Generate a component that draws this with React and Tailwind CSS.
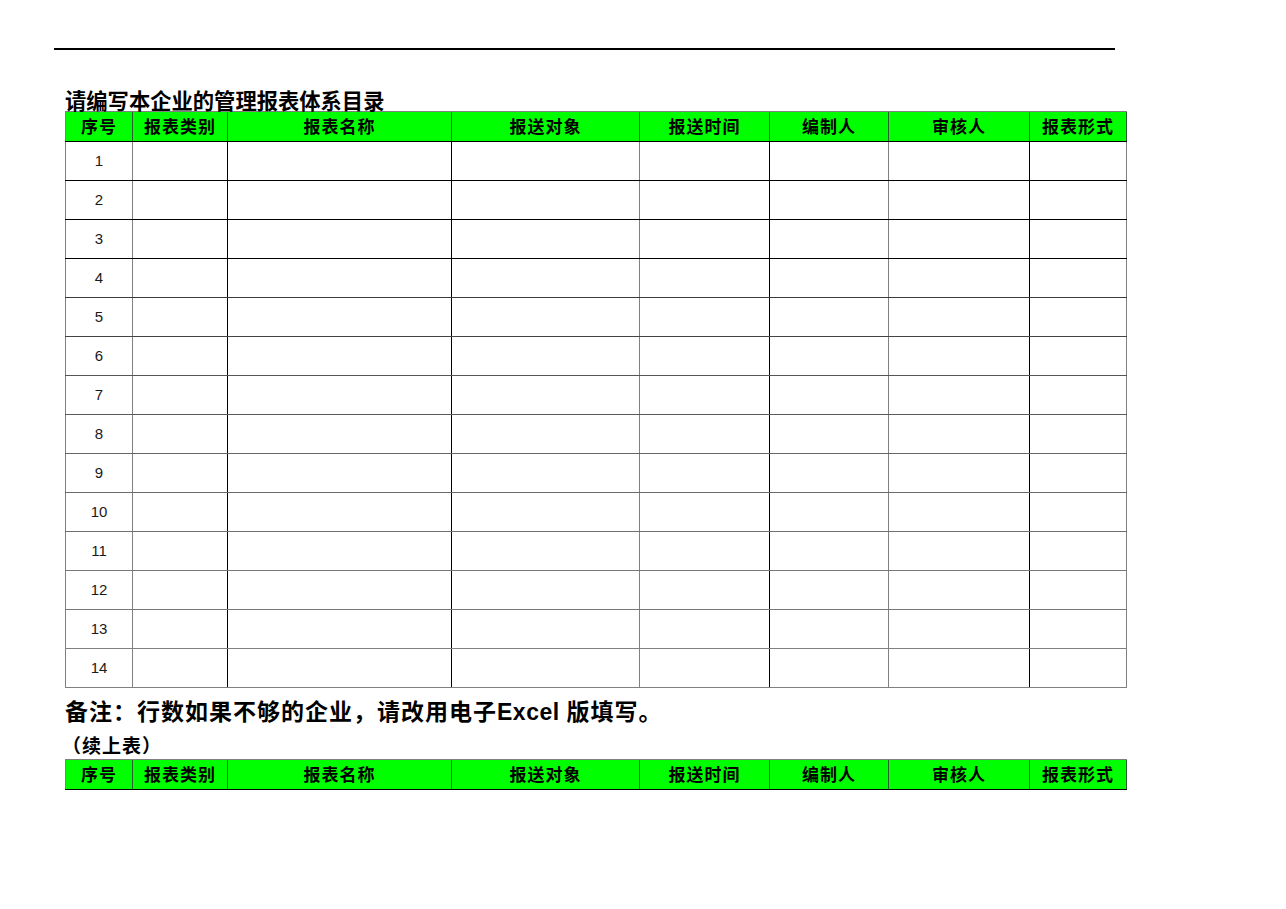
import React from 'react'

// 管理报表体系目录表
const cols = [
  { label: '序号', w: 'w-[67px]', line: 'border-l-[#808080]' },
  { label: '报表类别', w: 'w-[95px]', line: 'border-l-[#808080]' },
  { label: '报表名称', w: 'w-[224px]', line: 'border-l-black' },
  { label: '报送对象', w: 'w-[188px]', line: 'border-l-black' },
  { label: '报送时间', w: 'w-[130px]', line: 'border-l-[#808080]' },
  { label: '编制人', w: 'w-[119px]', line: 'border-l-black' },
  { label: '审核人', w: 'w-[141px]', line: 'border-l-[#808080]' },
  { label: '报表形式', w: 'w-[98px]', line: 'border-l-black border-r border-r-[#808080]' },
]

const rowLines = [
  'border-b-black', 'border-b-black', 'border-b-black',
  'border-b-[#3a3a3a]', 'border-b-[#444]', 'border-b-[#555]', 'border-b-[#5a5a5a]',
  'border-b-[#666]', 'border-b-[#6a6a6a]', 'border-b-[#707070]', 'border-b-[#777]',
  'border-b-[#777]', 'border-b-[#808080]', 'border-b-[#808080]',
]

const cjk = "font-['Noto_Sans_CJK_SC','Liberation_Sans',sans-serif]"

function HeaderRow() {
  return (
    <div className="flex h-[31px] border-t border-t-[#808080] border-b border-b-black bg-[#00ff00]">
      {cols.map((c, i) => (
        <div
          key={c.label}
          className={[
            'flex items-center justify-center border-l text-[17px] font-bold tracking-[1px] text-black',
            c.w,
            i === 0 ? 'border-l-[#808080]' : 'border-l-[#2f5f2f]',
            i === cols.length - 1 ? 'border-r border-r-[#2f5f2f]' : '',
          ].join(' ')}
        >
          {c.label}
        </div>
      ))}
    </div>
  )
}

function BodyRow({ n }) {
  return (
    <div className={`flex h-[39px] border-b ${rowLines[n - 1]}`}>
      {cols.map((c, i) => (
        <div
          key={c.label}
          className={['flex items-center justify-center border-l', c.w, c.line].join(' ')}
        >
          {i === 0 && (
            <span className="pt-[2px] font-['Liberation_Sans',sans-serif] text-[15px] text-[#1a1a1a]">{n}</span>
          )}
        </div>
      ))}
    </div>
  )
}

export default function App() {
  const rows = Array.from({ length: 14 }, (_, i) => i + 1)
  return (
    <div className={`min-h-[909px] w-[1286px] bg-white pl-[54px] pt-[48px] ${cjk}`}>
      <div className="h-[1.5px] w-[1061px] bg-black" />

      <div className="ml-[11px] w-[1062px]">
        <div className="mt-[39px] h-[22px] text-[21.3px] font-bold leading-[22px] text-black">
          请编写本企业的管理报表体系目录
        </div>

        <HeaderRow />
        {rows.map((n) => (
          <BodyRow key={n} n={n} />
        ))}

        <div className="mt-[7px] h-[30px] text-[23px] font-bold leading-[30px] tracking-[1px] text-black">
          备注：行数如果不够的企业，请改用电子<span className="font-['Liberation_Sans',sans-serif] tracking-[0.5px]">Excel </span>版填写。
        </div>

        <div className="mt-[7px] ml-[-3px] h-[26px] text-[19px] font-bold leading-[26px] tracking-[1px] text-black">
          （续上表）
        </div>

        <div className="mt-[1px]">
          <HeaderRow />
        </div>
      </div>
    </div>
  )
}
